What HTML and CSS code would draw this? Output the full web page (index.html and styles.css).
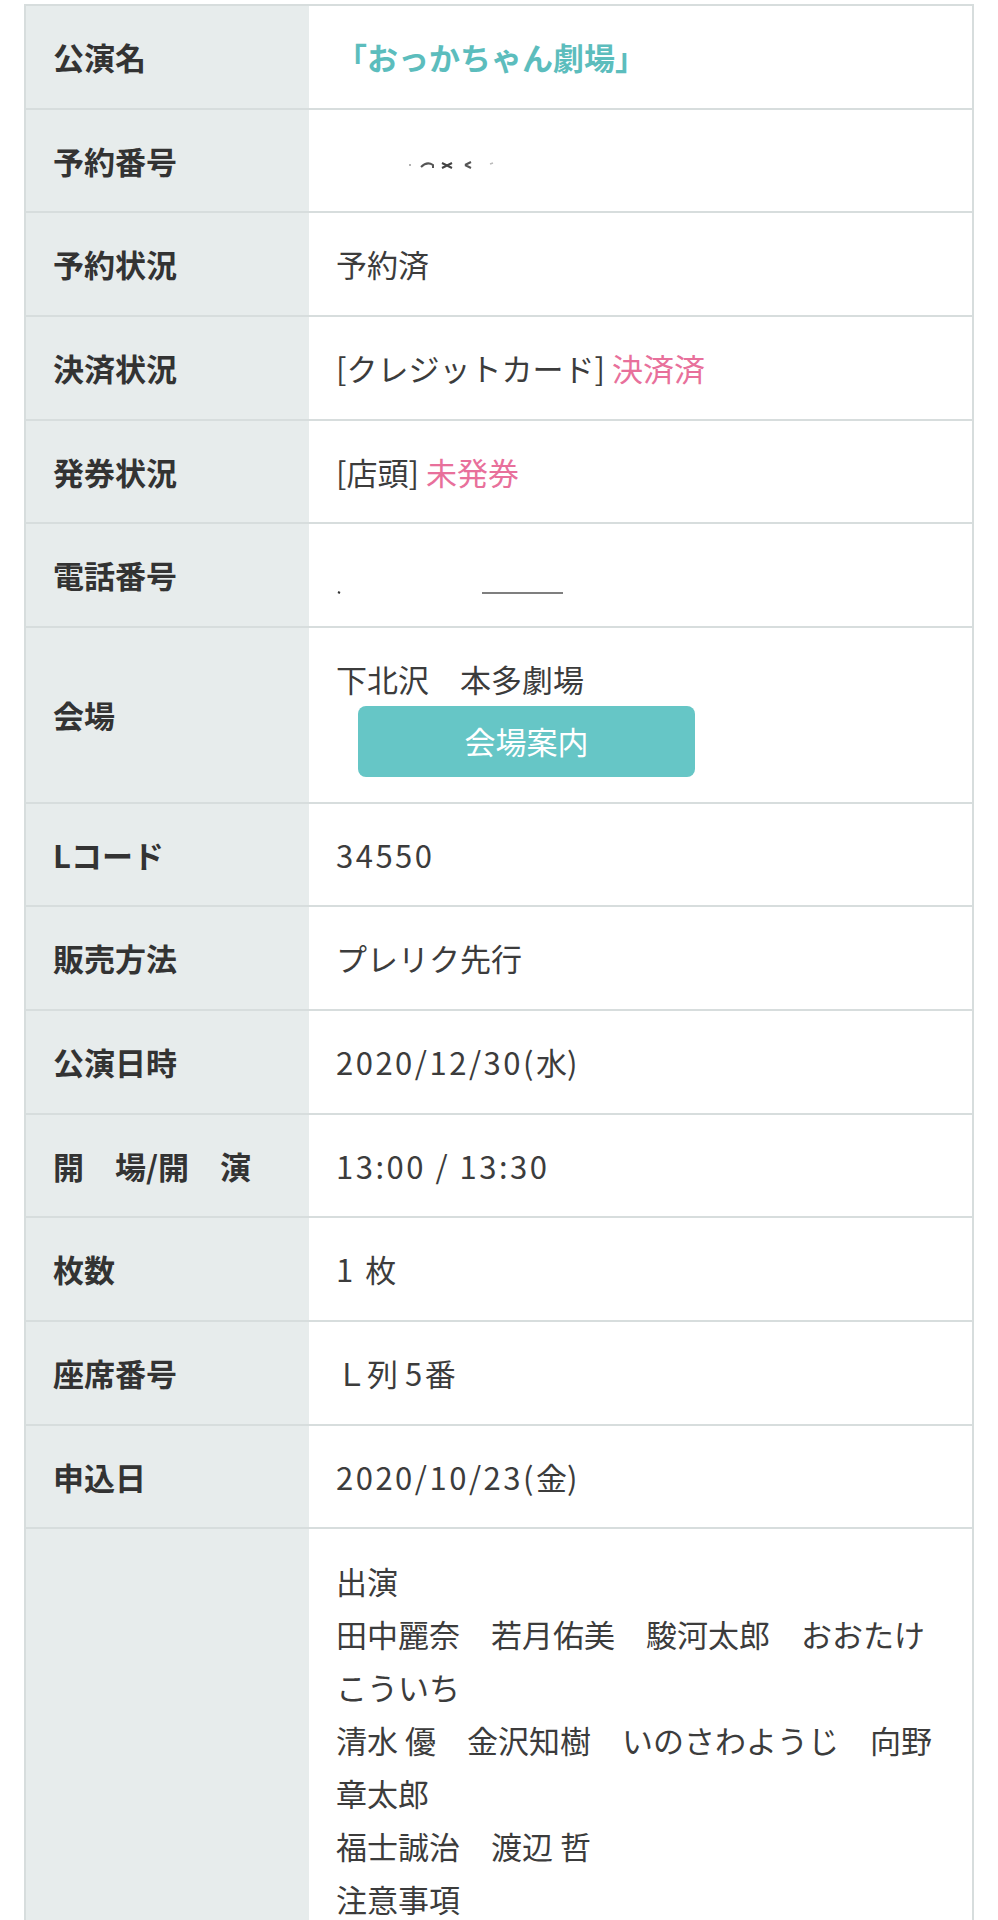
FILE: index.html
```html
<!DOCTYPE html>
<html lang="ja">
<head>
<meta charset="utf-8">
<title>予約詳細</title>
<link rel="stylesheet" href="styles.css">
</head>
<body>
<div class="sheet">
  <div class="row"><div class="th">公演名</div><div class="td title">「おっかちゃん劇場」</div></div>
  <div class="row"><div class="th">予約番号</div><div class="td"><span class="redact-id"><svg width="90" height="12" viewBox="0 0 90 12"><circle cx="3" cy="6" r="1" fill="#999"/><path d="M14 8 Q20 2 26 6 L26 9" stroke="#555" stroke-width="2" fill="none"/><path d="M35 4 L45 9 M35 9 L45 4" stroke="#444" stroke-width="2"/><path d="M58 6 L64 3 M58 6 L64 9" stroke="#555" stroke-width="2"/><path d="M83 5 L86 4" stroke="#bbb" stroke-width="1.5"/></svg></span></div></div>
  <div class="row"><div class="th">予約状況</div><div class="td">予約済</div></div>
  <div class="row"><div class="th">決済状況</div><div class="td">[クレジットカード] <span class="pink">決済済</span></div></div>
  <div class="row"><div class="th">発券状況</div><div class="td">[店頭] <span class="pink">未発券</span></div></div>
  <div class="row"><div class="th">電話番号</div><div class="td"><span class="redact-tel"><svg width="230" height="10" viewBox="0 0 230 10"><path d="M2 4 L4 5" stroke="#333" stroke-width="2"/><path d="M146 5 L227 5" stroke="#555" stroke-width="1.6"/></svg></span></div></div>
  <div class="row"><div class="th">会場</div><div class="td"><div>下北沢　本多劇場</div><div class="btn">会場案内</div></div></div>
  <div class="row"><div class="th">Lコード</div><div class="td"><span class="num">34550</span></div></div>
  <div class="row"><div class="th">販売方法</div><div class="td">プレリク先行</div></div>
  <div class="row"><div class="th">公演日時</div><div class="td"><span class="num">2020/12/30(</span>水)</div></div>
  <div class="row"><div class="th">開　場/開　演</div><div class="td"><span class="num">13:00 / 13:30</span></div></div>
  <div class="row"><div class="th">枚数</div><div class="td"><span class="num">1 </span>枚</div></div>
  <div class="row"><div class="th">座席番号</div><div class="td">Ｌ列 <span class="num">5</span>番</div></div>
  <div class="row"><div class="th">申込日</div><div class="td"><span class="num">2020/10/23(</span>金)</div></div>
  <div class="row"><div class="th"></div><div class="td notes">出演<br>田中麗奈　若月佑美　駿河太郎　おおたけこういち<br>清水 優　金沢知樹　いのさわようじ　向野章太郎<br>福士誠治　渡辺 哲<br>注意事項<br>&nbsp;</div></div>
</div>
</body>
</html>
```
FILE: styles.css
```css
html, body {
  margin: 0;
  padding: 0;
  background: #ffffff;
}
body {
  font-family: "Noto Sans CJK JP", "Noto Sans", sans-serif;
  color: #3a3a3a;
}
.sheet {
  margin: 4px 0 0 24px;
  width: 950px;
  box-sizing: border-box;
  border: 2px solid #d7dddd;
  border-bottom: none;
}
.row {
  display: grid;
  grid-template-columns: 283px 1fr;
  border-bottom: 2px solid #d7dddd;
}
.th {
  background: #e7ecec;
  padding: 25px 27px;
  font-size: 31px;
  line-height: 51.67px;
  font-weight: 700;
  color: #333333;
  display: flex;
  align-items: center;
  white-space: nowrap;
}
.td {
  padding: 25px 27px;
  font-size: 31px;
  line-height: 51.67px;
  color: #3c3c3c;
  min-width: 0;
}
.num {
  letter-spacing: 2.5px;
}
.title {
  color: #5cbdbd;
  font-weight: 700;
}
.pink {
  color: #e8709b;
}
.redact-id svg {
  vertical-align: middle;
  margin-left: 71px;
}
.redact-tel svg {
  vertical-align: -10px;
  margin-left: 0;
}
.btn {
  margin: 1px 0 0 22px;
  width: 337px;
  height: 71px;
  background: #66c6c6;
  border-radius: 8px;
  color: #ffffff;
  display: flex;
  align-items: center;
  justify-content: center;
  font-size: 31px;
}
.notes {
  line-height: 53px;
}
```
